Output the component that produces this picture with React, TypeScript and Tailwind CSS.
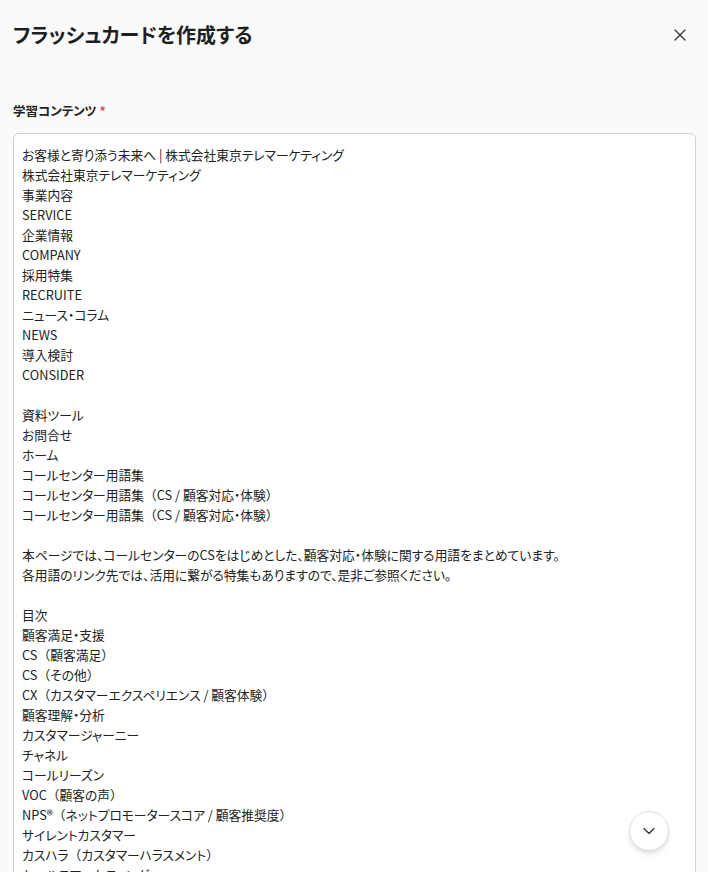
import { X, ChevronDown } from "lucide-react";

const lines = [
  "お客様と寄り添う未来へ | 株式会社東京テレマーケティング",
  "株式会社東京テレマーケティング",
  "事業内容",
  "SERVICE",
  "企業情報",
  "COMPANY",
  "採用特集",
  "RECRUITE",
  "ニュース・コラム",
  "NEWS",
  "導入検討",
  "CONSIDER",
  "",
  "資料ツール",
  "お問合せ",
  "ホーム",
  "コールセンター用語集",
  "コールセンター用語集（CS / 顧客対応・体験）",
  "コールセンター用語集（CS / 顧客対応・体験）",
  "",
  "本ページでは、コールセンターのCSをはじめとした、顧客対応・体験に関する用語をまとめています。",
  "各用語のリンク先では、活用に繋がる特集もありますので、是非ご参照ください。",
  "",
  "目次",
  "顧客満足・支援",
  "CS（顧客満足）",
  "CS（その他）",
  "CX（カスタマーエクスペリエンス / 顧客体験）",
  "顧客理解・分析",
  "カスタマージャーニー",
  "チャネル",
  "コールリーズン",
  "VOC（顧客の声）",
  "NPS®（ネットプロモータースコア / 顧客推奨度）",
  "サイレントカスタマー",
  "カスハラ（カスタマーハラスメント）",
  "セールスマーケティング",
  "インサイドセールス",
  "フィールドセールス",
];

// full-width brackets keep their full width, the rest is proportional
const Line = ({ text }: { text: string }) => {
  const parts = text.split(/([（）])/);
  return (
    <div className="h-[20px] whitespace-pre">
      {parts.map((p, i) =>
        /^[（）]$/.test(p) ? (
          <span key={i} className="[font-feature-settings:normal]">
            {p}
          </span>
        ) : (
          <span key={i}>{p}</span>
        )
      )}
    </div>
  );
};

export default function App() {
  return (
    <div className="relative h-screen overflow-hidden bg-[#fafafb] text-[#222] [font-family:'Noto_Sans_CJK_JP','Noto_Sans',sans-serif] [font-feature-settings:'palt']">
      <div className="flex items-center justify-between pl-[13px] pr-[18px] pt-[20px]">
        <h1 className="text-[20px] font-bold leading-[30px] text-[#1f1f1f]">
          フラッシュカードを作成する
        </h1>
        <button className="text-[#333]">
          <X size={20} strokeWidth={1.5} />
        </button>
      </div>

      <div className="mt-[51px] px-[13px] pr-[12px]">
        <label className="block text-[12.5px] font-bold leading-[20px] text-[#222]">
          学習コンテンツ <span className="text-[#d9534f]">*</span>
        </label>
        <div className="mt-[12px] rounded-md border border-[#cfcfd4] bg-white px-[8px] pt-[11px] text-[12.75px] leading-[20px] text-[#222]">
          {lines.map((l, i) => (
            <Line key={i} text={l} />
          ))}
        </div>
      </div>

      <button className="absolute left-[629px] top-[811px] flex h-[40px] w-[40px] items-center justify-center rounded-full border border-[#dedede] bg-white text-[#333] shadow-md">
        <ChevronDown size={20} strokeWidth={1.5} />
      </button>
    </div>
  );
}
